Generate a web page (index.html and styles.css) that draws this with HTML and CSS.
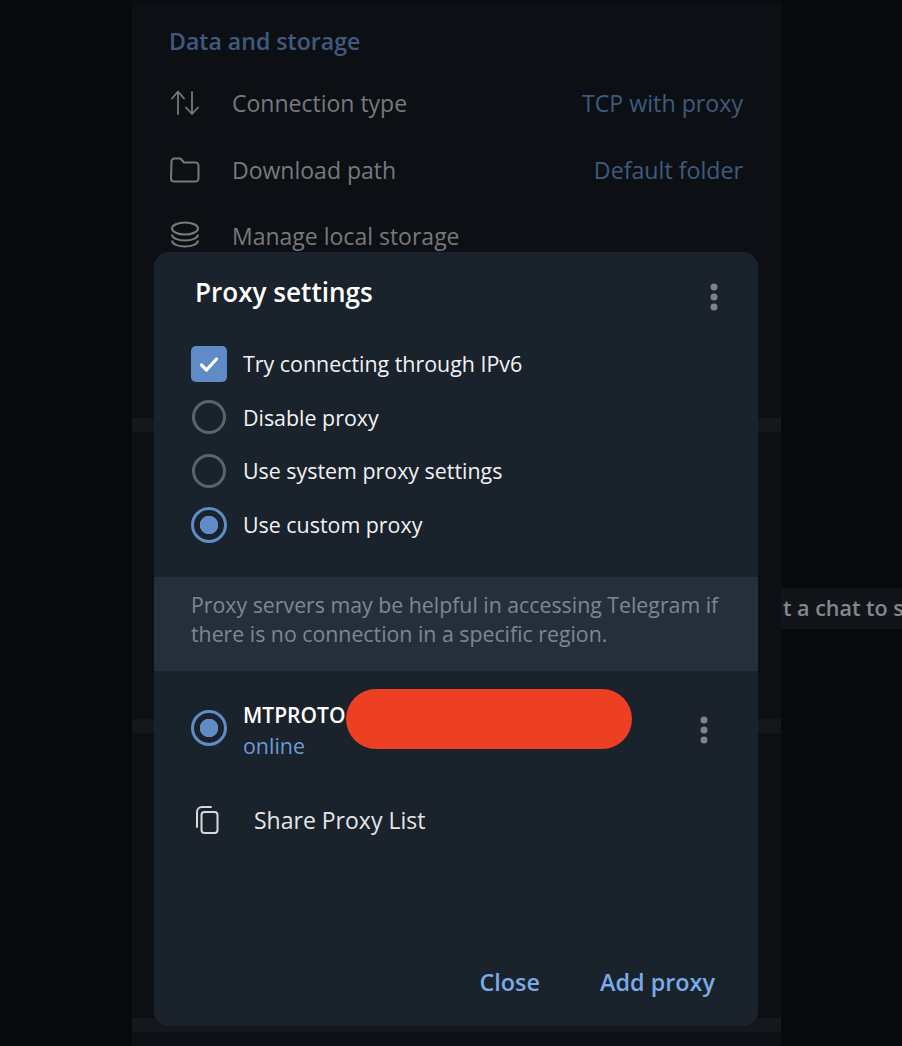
FILE: index.html
```html
<!DOCTYPE html>
<html lang="en">
<head>
<meta charset="utf-8">
<title>Proxy settings</title>
<link rel="stylesheet" href="styles.css">
</head>
<body>
<div class="app">
  <div class="gutter"></div>
  <main class="settings">
    <section class="group group-first">
      <h2 class="group-title">Data and storage</h2>
      <div class="row">
        <svg class="row-icon" viewBox="0 0 32 32" fill="none" stroke="#77797b" stroke-width="1.800" stroke-linecap="round" stroke-linejoin="round"><path d="M9 27V5M3 11.500 9 4.500l6 7M23 5v22M17 20.500l6 6.500 6-6.500"/></svg>
        <span class="row-label">Connection type</span>
        <span class="row-value">TCP with proxy</span>
      </div>
      <div class="row">
        <svg class="row-icon" viewBox="0 0 32 32" fill="none" stroke="#77797b" stroke-width="2" stroke-linejoin="round"><path d="M2.500 7.500a3 3 0 0 1 3-3h6l3.500 4h11.500a3 3 0 0 1 3 3v13a3 3 0 0 1-3 3h-21.500a3 3 0 0 1-3-3z"/></svg>
        <span class="row-label">Download path</span>
        <span class="row-value">Default folder</span>
      </div>
      <div class="row">
        <svg class="row-icon" viewBox="0 0 32 32" fill="none" stroke="#77797b" stroke-width="2"><ellipse cx="16" cy="8.500" rx="13" ry="6"/><path d="M3 14.500c0 3.500 6 6 13 6s13-2.500 13-6M3 20.500c0 3.500 6 6 13 6s13-2.500 13-6"/></svg>
        <span class="row-label">Manage local storage</span>
      </div>
    </section>
    <div class="divider d1"></div>
    <div class="blank b1"></div>
    <div class="divider"></div>
    <div class="blank b2"></div>
    <div class="divider"></div>
  </main>
  <aside class="chat">
    <span class="hint">t a chat to start messaging</span>
  </aside>
</div>

<div class="modal">
  <header class="modal-head">
    <h1 class="modal-title">Proxy settings</h1>
    <svg class="dots" viewBox="0 0 8 30" fill="#7d838b"><circle cx="4" cy="4" r="3.500"/><circle cx="4" cy="14" r="3.500"/><circle cx="4" cy="24" r="3.500"/></svg>
  </header>
  <div class="options">
    <label class="option">
      <span class="check"><svg viewBox="0 0 36 36" fill="none" stroke="#fff" stroke-width="3.200" stroke-linecap="round" stroke-linejoin="round"><path d="M10.500 19l5 5 10-11"/></svg></span>
      <span>Try connecting through IPv6</span>
    </label>
    <label class="option"><span class="radio"></span><span>Disable proxy</span></label>
    <label class="option"><span class="radio"></span><span>Use system proxy settings</span></label>
    <label class="option"><span class="radio on"></span><span>Use custom proxy</span></label>
  </div>
  <p class="note">Proxy servers may be helpful in accessing Telegram if there is no connection in a specific region.</p>
  <div class="proxy">
    <span class="radio on"></span>
    <div class="proxy-text">
      <div class="proxy-name">MTPROTO</div>
      <div class="proxy-status">online</div>
    </div>
    <span class="redact"></span>
    <svg class="dots" viewBox="0 0 8 30" fill="#7d838b"><circle cx="4" cy="4" r="3.500"/><circle cx="4" cy="14" r="3.500"/><circle cx="4" cy="24" r="3.500"/></svg>
  </div>
  <div class="share">
    <svg class="share-icon" viewBox="0 0 26 30" fill="none" stroke="#d6d8da" stroke-width="2" stroke-linecap="round"><rect x="7.500" y="7" width="16" height="21" rx="3"/><path d="M3 22V7a5 5 0 0 1 5-5h9"/></svg>
    <span>Share Proxy List</span>
  </div>
  <footer class="actions">
    <span class="action">Close</span>
    <span class="action">Add proxy</span>
  </footer>
</div>
</body>
</html>
```
FILE: styles.css
```css
* { box-sizing: border-box; }
html, body { margin: 0; height: 100%; }
body {
  position: relative;
  width: 902px;
  height: 1046px;
  overflow: hidden;
  background: #07090c;
  font-family: "Open Sans", "Noto Sans", sans-serif;
  font-size: 21.400px;
  color: #f2f3f4;
}
.app { display: flex; height: 1046px; }
.gutter { width: 132px; flex: none; }
.settings {
  width: 649px;
  flex: none;
  background: #0c1015;
  border-top: 4px solid #090c10;
}
.group { padding: 0 38px 0 37px; }
.group-first { height: 414px; }
.group-title {
  margin: 0;
  padding-top: 20px;
  height: 66px;
  font-size: 23.100px;
  line-height: 34px;
  font-weight: 600;
  color: #3f5a7c;
}
.row { display: flex; align-items: center; height: 66.500px; font-size: 23px; }
.row-icon { width: 32px; height: 32px; margin-right: 31px; flex: none; }
.row-label { flex: 1; color: #77797b; }
.row-value { color: #3f5a7c; font-size: 23.200px; }
.divider { height: 14px; background: #14181d; }
.b1 { height: 287px; }
.b2 { height: 285px; }
.chat {
  flex: 1;
  overflow: hidden;
  display: flex;
  align-items: flex-start;
  padding-top: 588px;
}
.hint {
  white-space: nowrap;
  height: 41px;
  line-height: 40px;
  padding: 0 16px 0 2px;
  background: #11151a;
  color: #84878a;
  font-weight: 600;
  font-size: 21.500px;
}

.modal {
  position: absolute;
  left: 154px;
  top: 252px;
  width: 604px;
  height: 774px;
  background: #1a222b;
  border-radius: 15px;
  display: flex;
  flex-direction: column;
}
.modal-head {
  display: flex;
  align-items: flex-start;
  justify-content: space-between;
  height: 85px;
  padding: 21px 40px 0 41px;
}
.modal-title {
  margin: 0;
  font-size: 26.100px;
  line-height: 38px;
  font-weight: 600;
  color: #fff;
}
.dots { width: 8px; height: 30px; flex: none; }
.modal-head .dots { margin-top: 10px; }
.options { display: flex; flex-direction: column; height: 240px; padding-left: 37px; }
.option { display: flex; align-items: center; height: 53.600px; gap: 16px; }
.check {
  width: 36px;
  height: 36px;
  flex: none;
  border-radius: 5px;
  background: #5f8bc6;
}
.check svg { display: block; width: 36px; height: 36px; }
.radio {
  width: 34px;
  height: 34px;
  margin: 0 1px;
  flex: none;
  border-radius: 50%;
  border: 3px solid #5a6471;
}
.radio.on {
  border-color: #5f8bc6;
  background: radial-gradient(circle, #5f8bc6 0 9px, transparent 9.500px);
  width: 36px;
  height: 36px;
  margin: 0;
}
.note {
  margin: 0;
  height: 94px;
  padding: 13px 31px 0 37px;
  background: #252f3c;
  color: #7d8794;
  font-size: 21.300px;
  line-height: 29px;
}
.proxy { position: relative; display: flex; align-items: center; height: 113px; padding: 0 50px 0 37px; }
.proxy-text { margin-left: 16px; flex: 1; padding-top: 7px; }
.proxy-name { font-size: 21px; line-height: 30px; font-weight: 600; color: #fff; }
.proxy-status { line-height: 32px; color: #6d9cd6; }
.proxy > .dots { margin-top: 6px; }
.redact {
  position: absolute;
  left: 192px;
  top: 18px;
  width: 286px;
  height: 60px;
  border-radius: 30px;
  background: #ec3f23;
}
.share { display: flex; align-items: center; height: 50px; margin-top: 11px; padding-left: 40px; color: #e4e6e8; font-size: 23px; }
.share-icon { width: 26px; height: 30px; margin: -1px 34px 0 0; flex: none; }
.actions {
  margin-top: auto;
  display: flex;
  justify-content: flex-end;
  gap: 60px;
  padding: 0 43px 27px 0;
}
.action { font-weight: 600; line-height: 34px; color: #78abe8; font-size: 23.400px; }
```
